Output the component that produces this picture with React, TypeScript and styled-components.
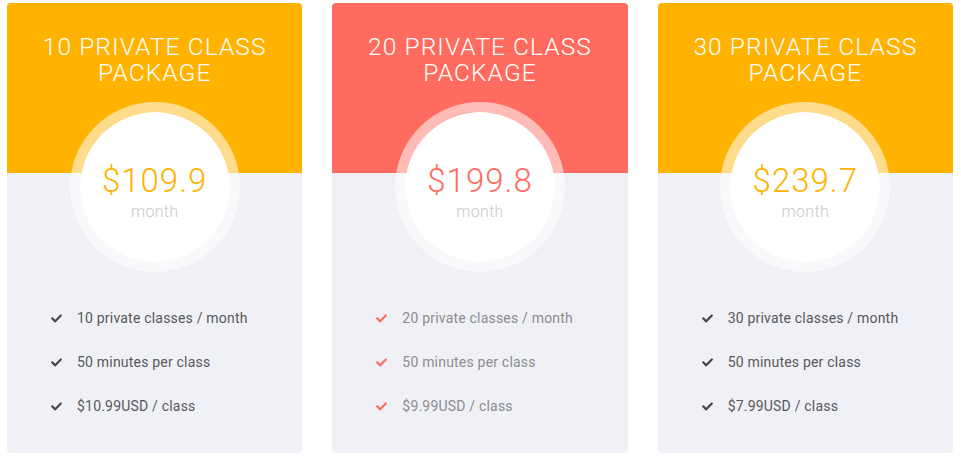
import React from 'react';
import styled, { createGlobalStyle } from 'styled-components';
import { FaCheck } from 'react-icons/fa';

const GlobalStyle = createGlobalStyle`
	html, body {
		margin: 0;
		padding: 0;
		background: #ffffff;
	}
	body {
		font-family: Roboto, 'Liberation Sans', sans-serif;
	}
`;

const Page = styled.div`
	display: flex;
	gap: 30px;
	padding: 3px 8px 0 7px;
	height: 458px;
	box-sizing: border-box;
`;

const Card = styled.div`
	flex: 1;
	height: 450px;
	display: flex;
	flex-direction: column;
	border-radius: 4px;
	overflow: hidden;
	background-color: #f0f1f6;
`;

const Header = styled.div<{ accent: string }>`
	position: relative;
	height: 170px;
	flex-shrink: 0;
	background-color: ${(p) => p.accent};
	display: flex;
	flex-direction: column;
	align-items: center;
`;

const Title = styled.h2`
	margin: 31px 0 0;
	font-family: Roboto, 'Liberation Sans', sans-serif;
	font-weight: 300;
	font-size: 24.5px;
	line-height: 26px;
	color: #ffffff;
	text-align: center;
	letter-spacing: 1.1px;
`;

const Ring = styled.div`
	position: absolute;
	left: 50%;
	top: 99px;
	margin-left: -85px;
	width: 170px;
	height: 170px;
	box-sizing: border-box;
	border-radius: 50%;
	border: 10px solid rgba(255, 255, 255, 0.55);
	background-clip: padding-box;
	display: flex;
	align-items: center;
	justify-content: center;
`;

const Disc = styled.div`
	width: 150px;
	height: 150px;
	box-sizing: border-box;
	padding-top: 51px;
	border-radius: 50%;
	background: #ffffff;
	display: flex;
	flex-direction: column;
	align-items: center;
`;

const Price = styled.div<{ accent: string }>`
	font-weight: 300;
	font-size: 33px;
	line-height: 36px;
	letter-spacing: 1px;
	color: ${(p) => p.accent};
`;

const Period = styled.div`
	font-weight: 300;
	font-size: 16px;
	line-height: 20px;
	letter-spacing: 0.3px;
	color: #c9c9cc;
	margin-top: 3px;
`;

const Features = styled.ul`
	list-style: none;
	margin: 0;
	padding: 136px 0 0 44px;
	display: flex;
	flex-direction: column;
	gap: 26px;
`;

const Feature = styled.li<{ muted: boolean }>`
	display: flex;
	align-items: center;
	height: 18px;
	font-family: Roboto, 'Liberation Sans', sans-serif;
	font-size: 14px;
	color: ${(p) => (p.muted ? '#8c8c90' : '#58585c')};
	letter-spacing: 0.2px;
`;

const Tick = styled.span<{ color: string }>`
	display: inline-flex;
	width: 26px;
	color: ${(p) => p.color};
	font-size: 11px;
`;

type Plan = {
	count: number;
	price: string;
	perClass: string;
	accent: string;
	tick: string;
	muted: boolean;
};

const plans: Plan[] = [
	{ count: 10, price: '$109.9', perClass: '$10.99USD / class', accent: '#ffb200', tick: '#454548', muted: false },
	{ count: 20, price: '$199.8', perClass: '$9.99USD / class', accent: '#ff6b5e', tick: '#ff6b5e', muted: true },
	{ count: 30, price: '$239.7', perClass: '$7.99USD / class', accent: '#ffb200', tick: '#454548', muted: false },
];

export default function App() {
	return (
		<>
			<GlobalStyle />
			<Page>
				{plans.map((plan) => (
					<Card key={plan.count}>
						<Header accent={plan.accent}>
							<Title>
								{plan.count} PRIVATE CLASS
								<br />
								PACKAGE
							</Title>
							<Ring>
								<Disc>
									<Price accent={plan.accent}>{plan.price}</Price>
									<Period>month</Period>
								</Disc>
							</Ring>
						</Header>
						<Features>
							{[`${plan.count} private classes / month`, '50 minutes per class', plan.perClass].map((text) => (
								<Feature key={text} muted={plan.muted}>
									<Tick color={plan.tick}>
										<FaCheck />
									</Tick>
									{text}
								</Feature>
							))}
						</Features>
					</Card>
				))}
			</Page>
		</>
	);
}
